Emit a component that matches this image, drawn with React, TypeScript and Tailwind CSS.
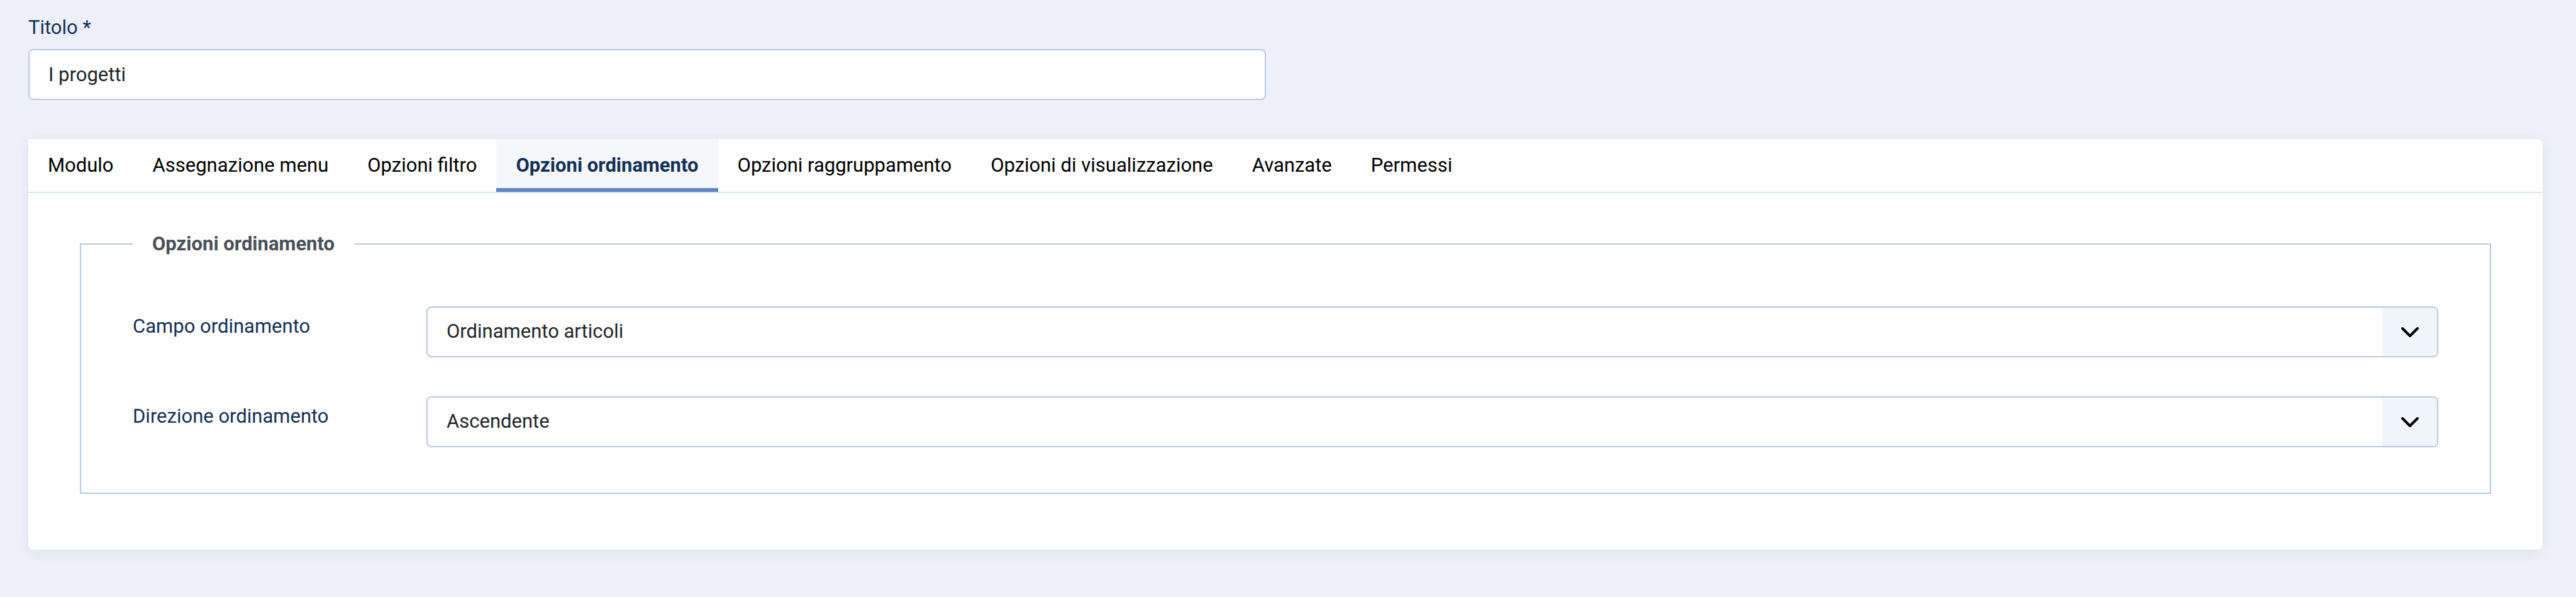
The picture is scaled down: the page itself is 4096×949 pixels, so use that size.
import { useState } from "react";

const TABS = [
  "Modulo",
  "Assegnazione menu",
  "Opzioni filtro",
  "Opzioni ordinamento",
  "Opzioni raggruppamento",
  "Opzioni di visualizzazione",
  "Avanzate",
  "Permessi",
];

function SelectField({ id, label, options }: { id: string; label: string; options: string[] }) {
  return (
    <div className="flex items-start">
      <label htmlFor={id} className="w-[467px] shrink-0 pt-2 leading-[47px] text-[#132f53]">
        {label}
      </label>
      <div className="grid flex-1">
        <select
          id={id}
          className="col-start-1 row-start-1 h-[81px] w-full appearance-none rounded-lg border-2 border-[#b8c9e0] bg-[#fefefe] pl-[30px] pr-[100px] text-[#22262a]"
        >
          {options.map((option) => (
            <option key={option}>{option}</option>
          ))}
        </select>
        <span className="pointer-events-none z-10 col-start-1 row-start-1 m-0.5 flex w-[87px] items-center justify-center justify-self-end rounded-r-md bg-[#f0f4fb]">
          <svg viewBox="0 0 16 16" className="size-8" fill="none" stroke="#000" strokeWidth="2" strokeLinecap="round" strokeLinejoin="round" aria-hidden="true">
            <path d="M2 5l6 6 6-6" />
          </svg>
        </span>
      </div>
    </div>
  );
}

export default function App() {
  const [active, setActive] = useState("Opzioni ordinamento");

  return (
    <main className="min-h-screen bg-[#edf0f9] pb-12 pl-[45px] pr-[53px] pt-5 font-[Roboto,sans-serif] text-[31px]">
      <div className="grid grid-cols-2 gap-[62px]">
        <div>
          <label htmlFor="title" className="block pb-[11px] leading-[47px] text-[#132f53]">
            Titolo *
          </label>
          <input
            id="title"
            type="text"
            defaultValue="I progetti"
            className="block h-[81px] w-full rounded-lg border-2 border-[#b8c9e0] bg-[#fefefe] px-[30px] text-[#22262a]"
          />
        </div>
      </div>

      <section className="mt-[62px] rounded-lg rounded-tl-none bg-[#fefefe] pb-[89px] shadow-[0_4px_20px_-2px_rgba(19,47,83,0.10)]">
        <div role="tablist" className="flex border-b-2 border-[#dee3f0]">
          {TABS.map((tab) => (
            <button
              key={tab}
              type="button"
              role="tab"
              aria-selected={tab === active}
              onClick={() => setActive(tab)}
              className={
                tab === active
                  ? "h-[84px] border-b-[6px] border-[#5f84c3] bg-[#f5f7fb] px-[31px] pt-1.5 font-bold text-[#132f53]"
                  : "h-[84px] border-b-[6px] border-transparent px-[31px] pt-1.5 text-black"
              }
            >
              {tab}
            </button>
          ))}
        </div>

        <div className="px-[82px] pt-[57px]">
          <fieldset className="border-2 border-[#b8c9e0] px-[82px] pb-[72px]">
            <legend className="px-[31px] font-bold leading-[47px] text-[#495057]">Opzioni ordinamento</legend>
            <div className="flex flex-col gap-[62px] pt-[76px]">
              <SelectField id="sort-field" label="Campo ordinamento" options={["Ordinamento articoli", "Titolo", "Data di creazione"]} />
              <SelectField id="sort-direction" label="Direzione ordinamento" options={["Ascendente", "Discendente"]} />
            </div>
          </fieldset>
        </div>
      </section>
    </main>
  );
}
